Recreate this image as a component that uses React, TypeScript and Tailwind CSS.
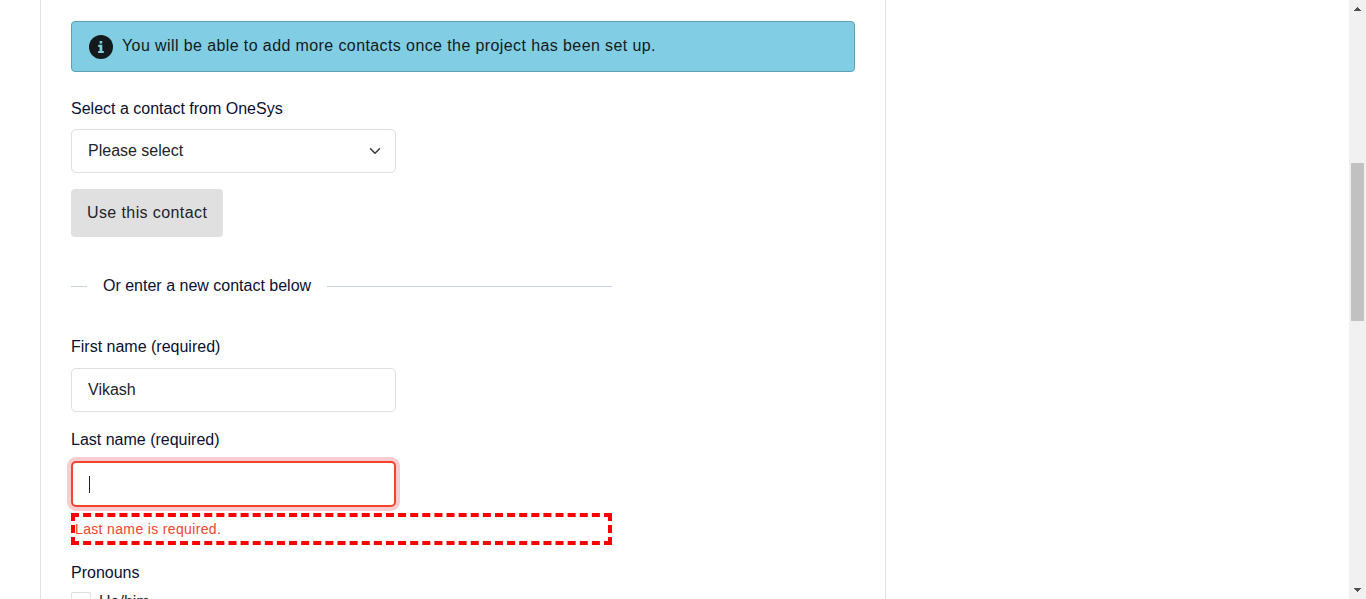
import { useState } from "react";

const label = "block text-base leading-6 text-[#0b1033]";
const field =
  "block rounded-[5px] bg-white px-4 text-base text-[#212529] outline-none";

function InfoIcon() {
  return (
    <svg className="size-6 shrink-0" viewBox="0 0 24 24" aria-hidden="true">
      <circle cx="12" cy="12" r="12" fill="#141a1c" />
      <path
        fill="#81cde3"
        d="M10.6 6h2.6v2.4h-2.6zM9.2 9.8h4.1v6.1h1.5V18H9.1v-2.1h1.5v-4H9.2z"
      />
    </svg>
  );
}

function Alert() {
  return (
    <div
      role="status"
      className="flex items-center gap-[9px] rounded-[4px] border border-[#5f9fb3] bg-[#81cde3] px-[17px] pt-[13px] pb-3 text-[#141a1c]"
    >
      <InfoIcon />
      <p className="pb-[2px] text-base leading-[22px] tracking-wide">
        You will be able to add more contacts once the project has been set up.
      </p>
    </div>
  );
}

function ContactPicker() {
  return (
    <div className="mt-[25px]">
      <label htmlFor="contact" className={label}>
        Select a contact from OneSys
      </label>
      <div className="relative mt-2 w-3/5">
        <select
          id="contact"
          className={`${field} h-11 w-full appearance-none border border-[#dfdfdf]`}
        >
          <option>Please select</option>
        </select>
        <svg
          className="pointer-events-none absolute top-4 right-[15px] size-3"
          viewBox="0 0 16 16"
          fill="none"
          stroke="#343a40"
          strokeWidth="2"
          strokeLinecap="round"
          strokeLinejoin="round"
          aria-hidden="true"
        >
          <path d="m2 5 6 6 6-6" />
        </svg>
      </div>
      <button
        type="button"
        className="mt-4 h-12 rounded-[4px] bg-[#e0e0e0] px-4 text-base tracking-wide text-[#212529]"
      >
        Use this contact
      </button>
    </div>
  );
}

function Divider() {
  return (
    <div className="mt-[37px] flex items-center gap-4">
      <span className="h-px w-4 bg-[#c9d1e2]" />
      <span className="text-base leading-6 text-[#0b1033]">
        Or enter a new contact below
      </span>
      <span className="h-px flex-1 bg-[#c9d1e2]" />
    </div>
  );
}

function NameFields() {
  const [first, setFirst] = useState("Vikash");
  const [last, setLast] = useState("");
  return (
    <>
      <div className="mt-[37px]">
        <label htmlFor="first-name" className={label}>
          First name (required)
        </label>
        <input
          id="first-name"
          value={first}
          onChange={(e) => setFirst(e.target.value)}
          className={`${field} mt-[9px] h-11 w-3/5 border border-[#dfdfdf]`}
        />
      </div>
      <div className="mt-4">
        <label htmlFor="last-name" className={label}>
          Last name (required)
        </label>
        <div className="relative mt-[9px] w-3/5">
          <input
            id="last-name"
            value={last}
            onChange={(e) => setLast(e.target.value)}
            aria-invalid="true"
            aria-describedby="last-name-error"
            className={`${field} h-[46px] w-full border-2 border-[#f4442e] caret-transparent ring-4 ring-[#f8cdd2]`}
          />
          {last === "" && (
            <span className="pointer-events-none absolute top-[15px] left-[18px] h-[17px] w-px bg-[#212529]" />
          )}
        </div>
        <p
          id="last-name-error"
          className="mt-[6px] border-4 border-dashed border-[#ff0000] text-sm leading-6 tracking-wide text-[#f4442e]"
        >
          Last name is required.
        </p>
      </div>
    </>
  );
}

function Pronouns() {
  return (
    <fieldset className="mt-4">
      <legend className={label}>Pronouns</legend>
      <div className="mt-[7px] flex gap-2">
        <input
          id="he-him"
          type="checkbox"
          className="size-5 shrink-0 appearance-none rounded-[2px] border border-[#dfdfdf] bg-white"
        />
        <label htmlFor="he-him" className="text-base leading-5 text-[#212529]">
          He/him
        </label>
      </div>
    </fieldset>
  );
}

function ScrollTrack() {
  return (
    <div
      aria-hidden="true"
      className="flex w-[17px] shrink-0 flex-col items-center bg-[#f1f1f1]"
    >
      <svg className="h-[17px] w-full shrink-0" viewBox="0 0 17 17">
        <path fill="#505050" d="M5 11V10h1V9h1V8h1V7h1v1h1v1h1v1h1v1z" />
      </svg>
      <div className="flex w-[13px] flex-1 flex-col">
        <div className="flex-[146]" />
        <div className="flex-[158] bg-[#c1c1c1]" />
        <div className="flex-[261]" />
      </div>
      <svg className="h-[17px] w-full shrink-0" viewBox="0 0 17 17">
        <path fill="#505050" d="M5 6v1h1v1h1v1h1v1h1V9h1V8h1V7h1V6z" />
      </svg>
    </div>
  );
}

export default function App() {
  return (
    <div className="flex h-screen overflow-hidden bg-white font-['Liberation_Sans',Arial,sans-serif]">
      <main className="min-w-0 flex-1 overflow-hidden pl-10">
        <form className="min-h-full max-w-[846px] border-x border-[#e1e1e8] px-[30px] pt-[21px]">
          <Alert />
          <div className="max-w-[541px]">
            <ContactPicker />
            <Divider />
            <NameFields />
            <Pronouns />
          </div>
        </form>
      </main>
      <ScrollTrack />
    </div>
  );
}
